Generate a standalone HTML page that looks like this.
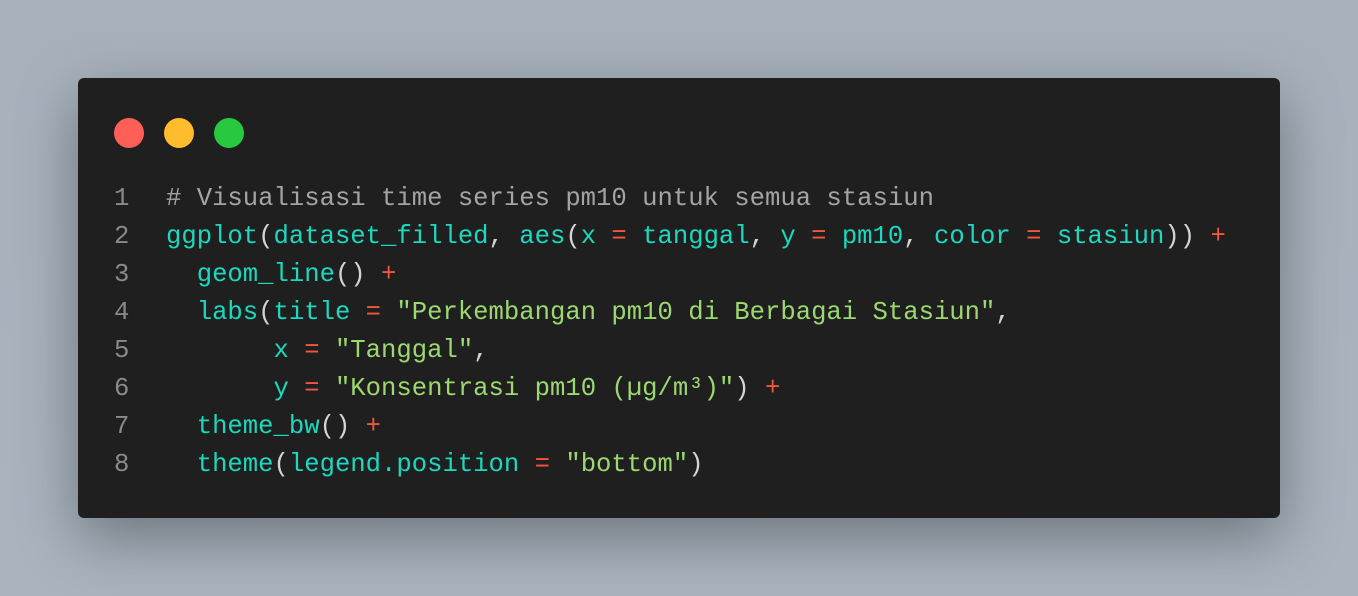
<!DOCTYPE html>
<html><head><meta charset="utf-8"><style>
html,body{margin:0;padding:0;width:1358px;height:596px;overflow:hidden;background:linear-gradient(180deg,#a7b1bc,#a9b4bf);}
.win{position:absolute;left:78px;top:78px;width:1202px;height:440px;background:#1f1f1f;border-radius:6px;box-shadow:0 20px 60px rgba(0,0,0,.35);}
.dot{position:absolute;top:40px;width:30px;height:30px;border-radius:50%;}
pre{position:absolute;left:0;top:102px;margin:0;font-family:"Liberation Mono",monospace;font-size:25.6px;line-height:38px;color:#d4d4d4;}
.n{display:inline-block;width:88px;text-align:left;padding-left:36px;box-sizing:border-box;color:#8a8a8a;}
.c{color:#a4a4a4}.f{color:#1cd8be}.o{color:#f2573d}.s{color:#9cd870}
</style></head><body>
<div class="win">
<div class="dot" style="left:36px;background:#ff5f57"></div>
<div class="dot" style="left:86px;background:#ffbd2e"></div>
<div class="dot" style="left:136px;background:#28c840"></div>
<pre><span class="n">1</span><span class="c"># Visualisasi time series pm10 untuk semua stasiun</span>
<span class="n">2</span><span class="f">ggplot</span>(<span class="f">dataset_filled</span>, <span class="f">aes</span>(<span class="f">x</span> <span class="o">=</span> <span class="f">tanggal</span>, <span class="f">y</span> <span class="o">=</span> <span class="f">pm10</span>, <span class="f">color</span> <span class="o">=</span> <span class="f">stasiun</span>)) <span class="o">+</span>
<span class="n">3</span>  <span class="f">geom_line</span>() <span class="o">+</span>
<span class="n">4</span>  <span class="f">labs</span>(<span class="f">title</span> <span class="o">=</span> <span class="s">"Perkembangan pm10 di Berbagai Stasiun"</span>,
<span class="n">5</span>       <span class="f">x</span> <span class="o">=</span> <span class="s">"Tanggal"</span>,
<span class="n">6</span>       <span class="f">y</span> <span class="o">=</span> <span class="s">"Konsentrasi pm10 (µg/m³)"</span>) <span class="o">+</span>
<span class="n">7</span>  <span class="f">theme_bw</span>() <span class="o">+</span>
<span class="n">8</span>  <span class="f">theme</span>(<span class="f">legend.position</span> <span class="o">=</span> <span class="s">"bottom"</span>)</pre>
</div>
</body></html>
